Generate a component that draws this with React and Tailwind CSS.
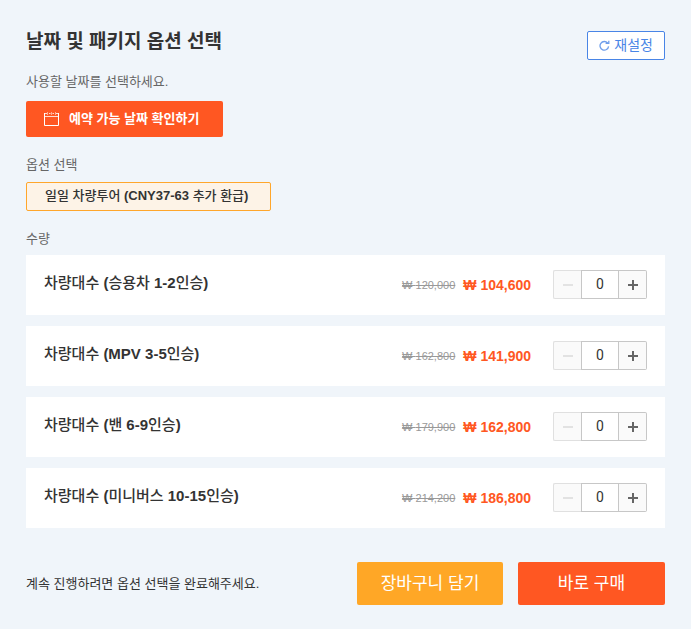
import { useState } from 'react';

const options = [
  { id: 'sedan', label: '차량대수 (승용차 1-2인승)', original: '120,000', price: '104,600' },
  { id: 'mpv', label: '차량대수 (MPV 3-5인승)', original: '162,800', price: '141,900' },
  { id: 'van', label: '차량대수 (밴 6-9인승)', original: '179,900', price: '162,800' },
  { id: 'minibus', label: '차량대수 (미니버스 10-15인승)', original: '214,200', price: '186,800' },
];

const CalendarIcon = () => (
  <svg width="15" height="14" viewBox="0 0 15 14" fill="none" stroke="currentColor" aria-hidden="true">
    <path d="M.5 1v12.5h14V1" />
    <path d="M.5 1.5H3M5 1.5h1.5M8.5 1.5H10M12 1.5h2.5" strokeOpacity="0.8" />
    <path d="M3.5 0v3M7.5 0v3M11.5 0v3" strokeOpacity="0.5" />
    <path d="M1 4.5h13" strokeOpacity="0.8" />
  </svg>
);

const ResetIcon = () => (
  <svg width="11" height="11" viewBox="0 0 11 11" fill="none" stroke="currentColor" strokeWidth="1.3" strokeOpacity="0.8" aria-hidden="true">
    <path d="M9.6 6.4A4.3 4.3 0 1 1 8.6 3" />
    <path d="M6.6 3.4h3.2V.8" />
  </svg>
);

// Latin letters and digits are set bold, hangul stays medium
const MixedLabel = ({ text }) =>
  text.split(/([A-Z0-9()-]+)/).map((part, index) =>
    index % 2 === 1 ? (
      <b key={index} className="font-bold">
        {part}
      </b>
    ) : (
      part
    )
  );

const Stepper = ({ label, value, onChange }) => (
  <div className="flex h-[29px] w-[94px] shrink-0">
    <button
      type="button"
      aria-label={`${label} 빼기`}
      disabled={value === 0}
      onClick={() => onChange(value - 1)}
      className="flex w-7 items-center justify-center rounded-l-xs border border-r-0 border-[#c7c7c7] bg-[#fafafa] text-[#666] disabled:border-[#e0e0e0] disabled:text-[#ddd]"
    >
      <svg width="10" height="10" viewBox="0 0 10 10" stroke="currentColor" strokeWidth="1.6" aria-hidden="true">
        <path d="M0 5h10" />
      </svg>
    </button>
    <input
      type="text"
      inputMode="numeric"
      aria-label={label}
      value={value}
      onChange={(e) => onChange(Number(e.target.value.replace(/\D/g, '')))}
      className="w-0 flex-1 border border-[#c7c7c7] bg-white pb-0.5 text-center font-['Roboto',sans-serif] text-sm text-[#333] outline-none"
    />
    <button
      type="button"
      aria-label={`${label} 더하기`}
      onClick={() => onChange(value + 1)}
      className="flex w-7 items-center justify-center rounded-r-xs border border-l-0 border-[#c7c7c7] bg-[#fafafa] text-[#666]"
    >
      <svg width="10" height="10" viewBox="0 0 10 10" stroke="currentColor" strokeWidth="2" aria-hidden="true">
        <path d="M0 5h10M5 0v10" />
      </svg>
    </button>
  </div>
);

export default function App() {
  const [counts, setCounts] = useState({ sedan: 0, mpv: 0, van: 0, minibus: 0 });

  return (
    <main className="min-h-screen bg-[#f0f5fa] px-[26px] pt-7 pb-6 font-['Liberation_Sans','Noto_Sans_CJK_KR',sans-serif] text-[13px] leading-5 text-[#333]">
      <div className="flex items-start justify-between">
        <h1 className="text-[19px] leading-7 font-bold">날짜 및 패키지 옵션 선택</h1>
        <button
          type="button"
          onClick={() => setCounts({ sedan: 0, mpv: 0, van: 0, minibus: 0 })}
          className="mt-[3px] flex h-[29px] items-center gap-1 rounded-xs border border-[#4985e6] bg-white px-[11px] pb-0.5 text-sm text-[#4985e6]"
        >
          <span className="pt-0.5">
            <ResetIcon />
          </span>
          재설정
        </button>
      </div>

      <p className="mt-3 text-[#666]">사용할 날짜를 선택하세요.</p>
      <button
        type="button"
        className="mt-[9px] flex h-9 items-center gap-2.5 rounded-xs bg-[#ff5722] pr-6 pl-[18px] text-[13px] font-bold text-white"
      >
        <CalendarIcon />
        예약 가능 날짜 확인하기
      </button>

      <h2 className="mt-[18px] text-[#666]">옵션 선택</h2>
      <button
        type="button"
        className="mt-[7px] block h-[29px] rounded-xs border border-[#ffa62b] bg-[#fdf3e7] pr-[22px] pb-0.5 pl-[18px] text-[13px] font-medium"
      >
        <MixedLabel text="일일 차량투어 (CNY37-63 추가 환급)" />
      </button>

      <h2 className="mt-[18px] text-[#666]">수량</h2>
      <ul className="mt-[6px] flex flex-col gap-[11px]">
        {options.map((item) => (
          <li key={item.id} className="flex h-[60px] items-center bg-white px-[18px] pb-px">
            <span className="flex-1 pb-1 text-[15px] font-medium">
              <MixedLabel text={item.label} />
            </span>
            <s className="text-[11px] text-[#999]">₩ {item.original}</s>
            <strong className="ml-2 text-sm text-[#ff5722]">₩ {item.price}</strong>
            <div className="ml-[22px]">
              <Stepper
                label={item.label}
                value={counts[item.id]}
                onChange={(value) => setCounts({ ...counts, [item.id]: value })}
              />
            </div>
          </li>
        ))}
      </ul>

      <div className="mt-[34px] flex items-center gap-[15px]">
        <p className="flex-1">계속 진행하려면 옵션 선택을 완료해주세요.</p>
        <button type="button" className="h-[43px] w-[146px] rounded-xs bg-[#ffa726] text-[17px] text-white">
          장바구니 담기
        </button>
        <button type="button" className="h-[43px] w-[147px] rounded-xs bg-[#ff5722] text-[17px] text-white">
          바로 구매
        </button>
      </div>
    </main>
  );
}
